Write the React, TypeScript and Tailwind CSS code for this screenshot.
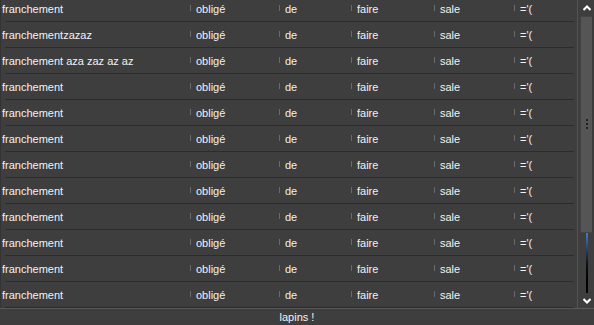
import React from "react";

const firsts = [
  "franchement",
  "franchementzazaz",
  "franchement aza zaz az az",
  "franchement",
  "franchement",
  "franchement",
  "franchement",
  "franchement",
  "franchement",
  "franchement",
  "franchement",
  "franchement",
];

function Cell({ w, text }: { w: string; text: string }) {
  return (
    <div className={`flex items-center h-full ${w}`}>
      <div className="w-px h-[6px] bg-[#6a6a6a] mt-[-4px]" />
      <span className="ml-[5px]">{text}</span>
    </div>
  );
}

export default function App() {
  return (
    <div
      className="w-[594px] h-[325px] bg-[#3e3e3e] text-[#f2f2f2] text-[11px] flex flex-col overflow-hidden"
      style={{ fontFamily: '"Liberation Sans", Arial, sans-serif' }}
    >
      <div className="flex h-[308px]">
        <div className="w-[578px] h-full overflow-hidden border-r border-[#545454] border-l border-l-[#343434]">
          <div className="mt-[-4px] flex flex-col">
            {firsts.map((f, i) => (
              <div key={i} className="flex flex-col">
                <div className="h-[25px] pt-[2px] flex items-center">
                  <div className="w-[189px] pl-[1px] whitespace-nowrap">{f}</div>
                  <Cell w="w-[89px]" text="obligé" />
                  <Cell w="w-[72px]" text="de" />
                  <Cell w="w-[83px]" text="faire" />
                  <Cell w="w-[80px]" text="sale" />
                  <Cell w="flex-1" text="='(" />
                </div>
                <div className="h-px bg-[#2c2c2c] ml-[4px] mr-[3px]" />
              </div>
            ))}
          </div>
        </div>
        <div className="w-[15px] h-full flex flex-col items-center pl-[2px]">
          <div className="h-[16px] flex items-center justify-center w-full">
            <svg width="8" height="6" viewBox="0 0 8 6">
              <path d="M0.5 5 L4 1.5 L7.5 5" stroke="#ffffff" strokeWidth="2" fill="none" />
            </svg>
          </div>
          <div className="w-full h-[217px] bg-[#555555] border border-[#444444] border-r-[#3a3a3a] flex items-center justify-center">
            <div className="flex flex-col gap-[2px] mt-[-2px]">
              <div className="w-[2px] h-[2px] bg-[#222222]" />
              <div className="w-[2px] h-[2px] bg-[#222222]" />
              <div className="w-[2px] h-[2px] bg-[#222222]" />
            </div>
          </div>
          <div className="flex-1 w-full flex justify-center">
            <div className="w-[2px] h-[60px] bg-gradient-to-b from-[#3b7fd6] via-[#101418] to-[#000000]" />
          </div>
          <div className="h-[14px] flex items-center justify-center w-full">
            <svg width="8" height="6" viewBox="0 0 8 6">
              <path d="M0.5 1 L4 4.5 L7.5 1" stroke="#ffffff" strokeWidth="2" fill="none" />
            </svg>
          </div>
        </div>
      </div>
      <div className="flex-1 border-t border-[#595959] flex items-center justify-center">
        lapins !
      </div>
    </div>
  );
}
